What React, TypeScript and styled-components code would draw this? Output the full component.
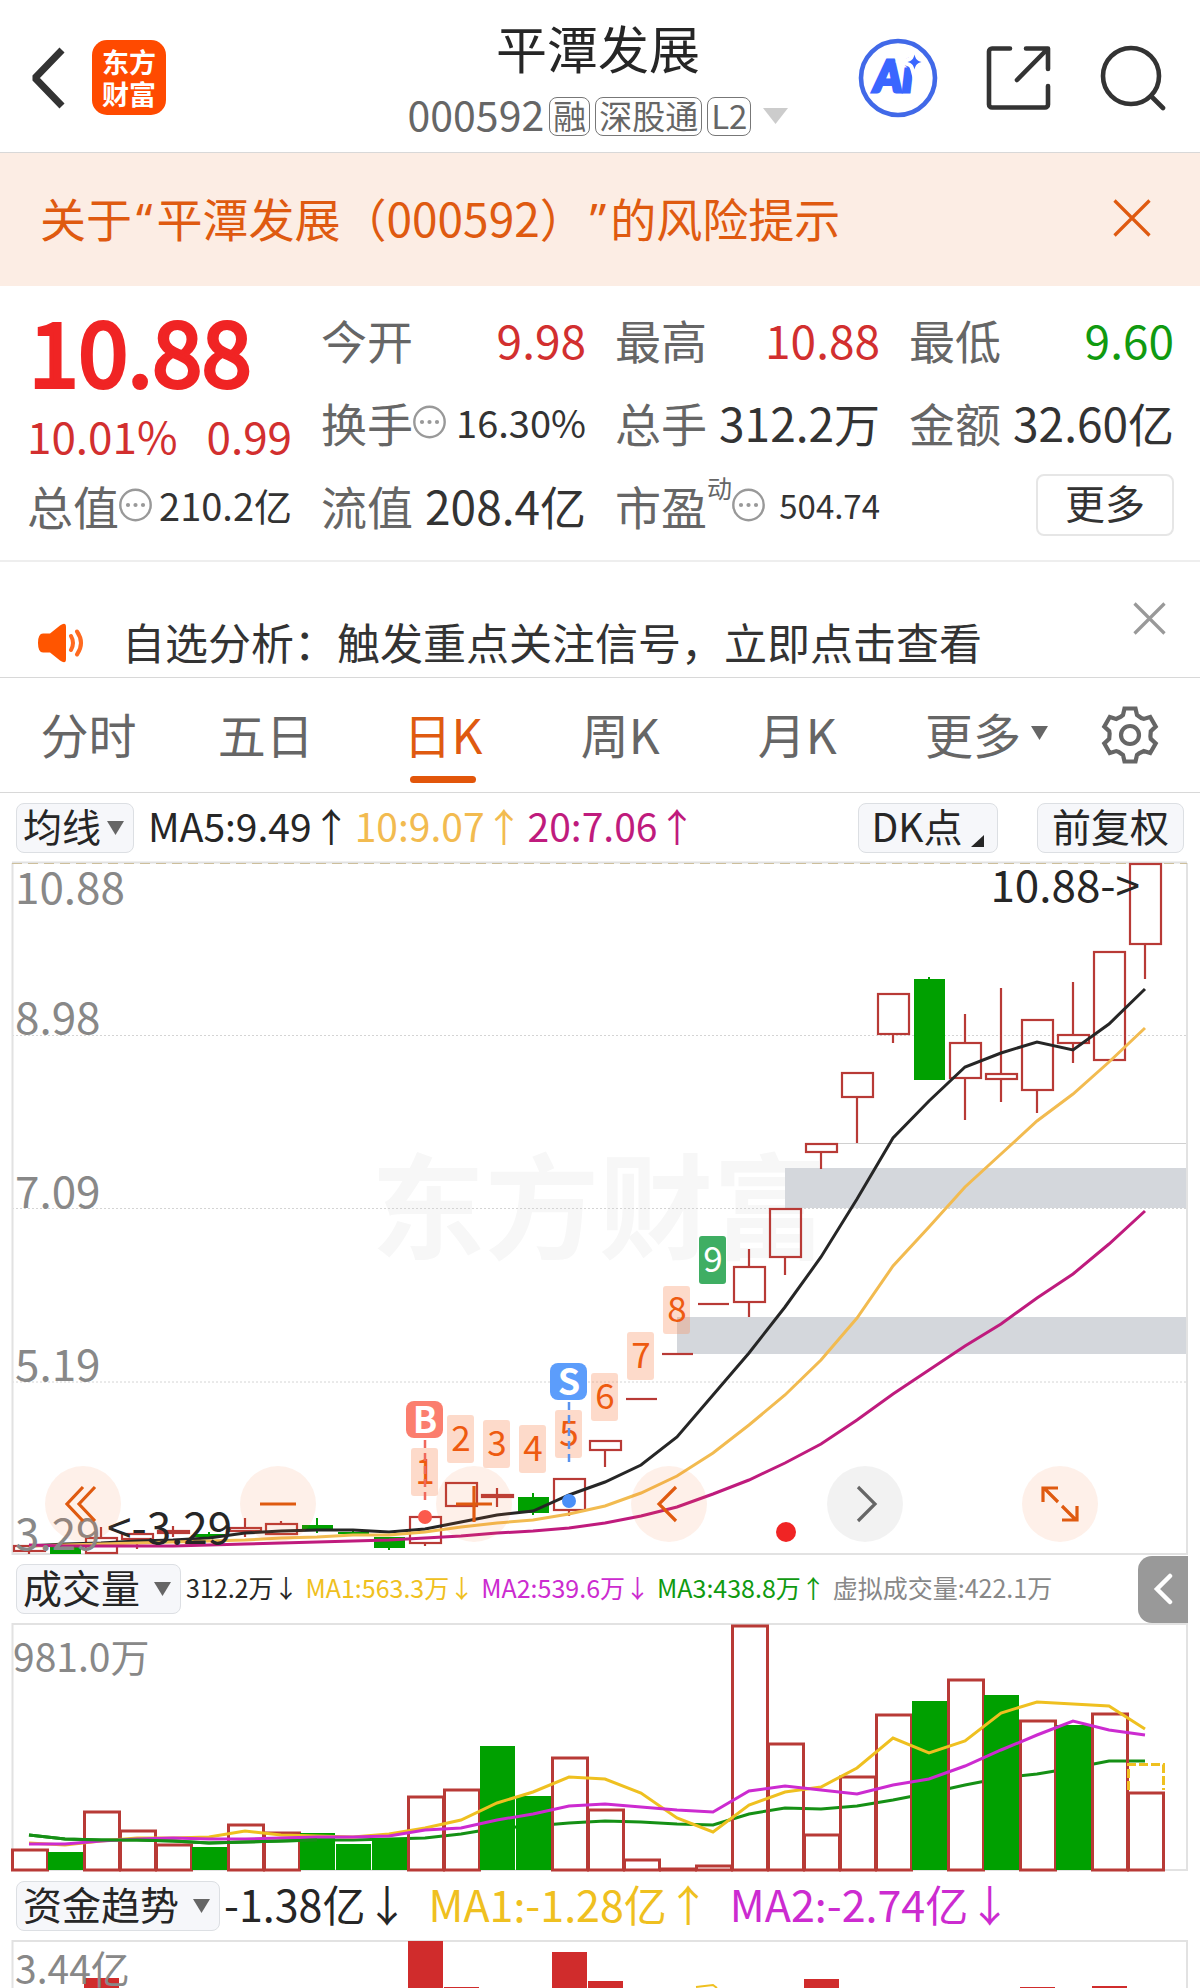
import React, { useState } from 'react';
import styled, { createGlobalStyle } from 'styled-components';

const C = {
  ink: '#262626',
  text: '#333333',
  label: '#666666',
  muted: '#888888',
  line: '#d8d8d8',
  orange: '#df5a10',
  red: '#d22f2f',
  up: '#b83a36',
  green: '#00a000',
  yellow: '#efc020',
  purple: '#cc2bd0',
  magenta: '#bf1b7d',
  amber: '#f2bb50',
};

const GlobalStyle = createGlobalStyle`
  *, *::before, *::after { box-sizing: border-box; }
  body {
    margin: 0;
    background: #fff;
    color: ${C.ink};
    font-family: "Noto Sans CJK SC", "Noto Sans", sans-serif;
    text-spacing-trim: space-all;
  }
  button, select { font-family: inherit; color: inherit; }
  svg { display: block; }
`;

const Page = styled.main`
  overflow: hidden;
  background: #fff;
`;

const PlainButton = styled.button`
  display: flex;
  align-items: center;
  justify-content: center;
  padding: 0;
  border: 0;
  background: none;
  cursor: pointer;
`;

/* ---------- header ---------- */

const Header = styled.header`
  display: grid;
  grid-template-columns: 1fr auto 1fr;
  align-items: center;
  height: 153px;
  padding: 0 34px 0 30px;
  border-bottom: 1px solid ${C.line};
`;

const HeaderSide = styled.div<{ $end?: boolean }>`
  display: flex;
  align-items: center;
  justify-content: ${p => (p.$end ? 'flex-end' : 'flex-start')};
  gap: ${p => (p.$end ? 48 : 26)}px;
  padding-top: 3px;
`;

const Logo = styled.a`
  display: grid;
  place-content: center;
  width: 74px;
  height: 75px;
  border-radius: 15px;
  background: #ff4a00;
  color: #fff;
  font-size: 27px;
  font-weight: 700;
  line-height: 32px;
  text-align: center;
  text-decoration: none;
`;

const Titles = styled.div`
  display: flex;
  flex-direction: column;
  align-items: center;
`;

const Title = styled.h1`
  margin: 0;
  padding-top: 12px;
  font-size: 51px;
  font-weight: 400;
  line-height: 68px;
`;

const SubTitle = styled.div`
  display: flex;
  align-items: center;
  gap: 5px;
  height: 70px;
  color: ${C.label};
  font-size: 41px;
`;

const Tag = styled.span`
  height: 39px;
  padding: 0 3px;
  border: 1px solid #777;
  border-radius: 8px;
  font-size: 33px;
  line-height: 34px;
`;

const Code = styled.span`
  padding-bottom: 6px;
  line-height: 48px;
`;

const Expand = styled(PlainButton)`
  padding-left: 7px;
`;

/* ---------- risk banner ---------- */

const Banner = styled.section`
  display: flex;
  align-items: center;
  justify-content: space-between;
  height: 133px;
  padding: 0 49px 3px 40px;
  background: #fcede4;
  color: ${C.orange};
`;

const BannerLink = styled.a`
  color: inherit;
  font-size: 46px;
  line-height: 60px;
  text-decoration: none;
`;

const Quote = styled.span`
  padding: 0 4px;
  font-family: "Noto Sans", sans-serif;
`;

/* ---------- quote figures ---------- */

const Figures = styled.section`
  display: grid;
  grid-template-columns: repeat(4, 1fr);
  grid-template-rows: repeat(3, 83px);
  column-gap: 29px;
  height: 276px;
  padding: 11px 26px 0 27px;
  border-bottom: 2px solid #eeeeee;
`;

const Headline = styled.div`
  grid-row: span 2;
  display: flex;
  flex-direction: column;
  color: #f02424;
`;

const Price = styled.strong`
  padding-left: 2px;
  font-size: 89px;
  font-weight: 400;
  line-height: 104px;
  -webkit-text-stroke: 4px #f02424;
`;

const Change = styled.div`
  display: flex;
  justify-content: space-between;
  color: ${C.red};
  font-size: 44px;
  line-height: 68px;
`;

const Figure = styled.div`
  display: flex;
  align-items: center;
  justify-content: space-between;
  white-space: nowrap;
  line-height: 60px;
`;

const FigureLabel = styled.span`
  display: flex;
  align-items: center;
  color: ${C.label};
  font-size: 46px;
`;

const FigureValue = styled.span<{ $size?: number; $color?: string }>`
  color: ${p => p.$color || C.text};
  font-size: ${p => p.$size || 46}px;
`;

const Dynamic = styled.sup`
  align-self: flex-start;
  font-size: 25px;
  line-height: 24px;
`;

const MoreButton = styled(PlainButton)`
  justify-self: end;
  align-self: center;
  width: 138px;
  height: 62px;
  padding-bottom: 5px;
  border: 2px solid #e6e6e6;
  border-radius: 8px;
  color: ${C.text};
  font-size: 40px;
  line-height: 56px;
`;

/* ---------- notice ---------- */

const Notice = styled.section`
  display: flex;
  align-items: center;
  height: 116px;
  padding: 47px 34px 0 37px;
  border-bottom: 1px solid ${C.line};
`;

const NoticeText = styled.a`
  flex: 1;
  padding: 0 0 4px 36px;
  color: ${C.text};
  font-size: 43px;
  line-height: 56px;
  text-decoration: none;
`;

const NoticeClose = styled(PlainButton)`
  align-self: flex-start;
  margin-top: -7px;
`;

/* ---------- period tabs ---------- */

const Tabs = styled.nav`
  display: grid;
  grid-template-columns: repeat(6, 4fr) 3fr;
  height: 115px;
  padding-right: 4px;
  border-bottom: 1px solid ${C.line};
`;

const Tab = styled(PlainButton)<{ $active?: boolean }>`
  position: relative;
  gap: 10px;
  padding-bottom: 4px;
  color: ${p => (p.$active ? C.orange : C.label)};
  font-size: 48px;
  line-height: 60px;

  &::after {
    content: '';
    position: absolute;
    bottom: 9px;
    left: 50%;
    width: 66px;
    height: 7px;
    margin-left: -33px;
    border-radius: 4px;
    background: ${p => (p.$active ? '#e2560a' : 'transparent')};
  }
`;

const MoreTab = styled(Tab)`
  padding-left: 24px;
`;

/* ---------- indicator bars ---------- */

const IndicatorBar = styled.div<{ $height: number }>`
  display: flex;
  align-items: center;
  height: ${p => p.$height}px;
  padding: 0 12px 0 16px;
  white-space: nowrap;
`;

const SelectBox = styled.label<{ $width: number }>`
  display: grid;
  align-items: center;
  width: ${p => p.$width}px;
  height: 50px;
  border: 1px solid #dcdfe3;
  border-radius: 8px;
  background: #f6f7fa;

  > * { grid-area: 1 / 1; }
  > svg { justify-self: end; margin-right: 9px; pointer-events: none; }
`;

const Select = styled.select`
  width: 100%;
  height: 48px;
  padding: 0 0 5px 6px;
  border: 0;
  background: none;
  appearance: none;
  font-size: 39px;
  line-height: 43px;
`;

const ChipButton = styled(PlainButton)<{ $width: number }>`
  width: ${p => p.$width}px;
  height: 50px;
  padding-bottom: 5px;
  border: 1px solid #dcdfe3;
  border-radius: 8px;
  background: #f6f7fa;
  font-size: 39px;
  line-height: 44px;
`;

const Chips = styled.div`
  display: flex;
  gap: 39px;
  margin-left: auto;
  padding-right: 4px;
`;

const Readings = styled.div<{ $size: number; $gap: number; $left: number }>`
  display: flex;
  gap: ${p => p.$gap}px;
  padding: 0 0 5px ${p => p.$left}px;
  font-size: ${p => p.$size}px;
  line-height: 48px;
`;

const Reading = styled.span<{ $color: string }>`
  color: ${p => p.$color};
`;

const CollapseButton = styled(PlainButton)`
  width: 50px;
  height: 67px;
  margin-left: auto;
  border-radius: 14px 0 0 14px;
  background: #999;
`;

/* ---------- charts ---------- */

const ChartPanel = styled.section`
  position: relative;
  padding: 0 12px;
`;

const Drawing = styled.svg`
  width: 100%;
  height: auto;
  overflow: visible;
`;

const ChartControls = styled.div`
  position: absolute;
  right: 102px;
  bottom: 13px;
  left: 45px;
  display: flex;
  justify-content: space-between;
`;

const RoundButton = styled(PlainButton)<{ $muted?: boolean }>`
  width: 76px;
  height: 76px;
  border-radius: 50%;
  background: ${p => (p.$muted ? 'rgba(0, 0, 0, 0.05)' : 'rgba(250, 110, 40, 0.1)')};
`;

/* ---------- icons ---------- */

const Triangle = ({ w, h, color = C.label }: { w: number; h: number; color?: string }) => (
  <svg width={w} height={h} viewBox="0 0 10 10" preserveAspectRatio="none" aria-hidden="true">
    <path d="M0 0h10L5 10z" fill={color} />
  </svg>
);

const Cross = ({ size, color, width }: { size: number; color: string; width: number }) => (
  <svg width={size} height={size} viewBox={`0 0 ${size} ${size}`} aria-hidden="true">
    <path d={`M1.5 1.5L${size - 1.5} ${size - 1.5}M${size - 1.5} 1.5L1.5 ${size - 1.5}`} stroke={color} strokeWidth={width} />
  </svg>
);

const InfoDots = () => (
  <svg width="33" height="34" viewBox="0 0 33 34" aria-hidden="true">
    <circle cx="16.5" cy="17" r="15.2" fill="none" stroke="#999" strokeWidth="2.4" />
    <g fill="#999">
      <circle cx="9" cy="17" r="2.1" />
      <circle cx="16.5" cy="17" r="2.1" />
      <circle cx="24" cy="17" r="2.1" />
    </g>
  </svg>
);

const BackIcon = () => (
  <svg width="36" height="62" viewBox="0 0 36 62" fill="none" stroke="#333" strokeWidth="7" aria-hidden="true">
    <path d="M32 3L5 31l27 28" strokeLinejoin="bevel" />
  </svg>
);

const AiIcon = () => (
  <svg width="80" height="80" viewBox="0 0 80 80" aria-hidden="true">
    <text x="16" y="54" fontFamily="Lato, sans-serif" fontSize="43" fontWeight="900" fontStyle="italic" fill="#3a66ff" stroke="#3a66ff" strokeWidth="3">Ai</text>
    <path d="M56.500 16.500c1.300 5 2.500 6 7 7.500c-4.500 1.500-5.700 2.500-7 7.500c-1.300-5-2.500-6-7-7.500c4.500-1.500 5.700-2.500 7-7.500z" fill="#3a66ff" stroke="#fff" strokeWidth="8" paintOrder="stroke" />
    <circle cx="40" cy="40" r="37" fill="none" stroke="#4169e8" strokeWidth="4.6" />
  </svg>
);

const ShareIcon = () => (
  <svg width="66" height="66" viewBox="0 0 66 66" fill="none" stroke="#333" strokeWidth="4.600" strokeLinecap="round" strokeLinejoin="round" aria-hidden="true">
    <path d="M24 3.500H6a3 3 0 0 0-3 3V59.500a3 3 0 0 0 3 3H59a3 3 0 0 0 3-3V41" />
    <path d="M40 3.500H62V24M61 4.500L31 35" />
  </svg>
);

const SearchIcon = () => (
  <svg width="66" height="66" viewBox="0 0 66 66" fill="none" stroke="#333" strokeWidth="4.600" strokeLinecap="round" aria-hidden="true">
    <circle cx="31" cy="31" r="28" />
    <path d="M51 51L63 63" />
  </svg>
);

const SpeakerIcon = () => (
  <svg width="49" height="40" viewBox="0 0 49 40" aria-hidden="true">
    <path d="M6 10.500H13L23 2.500Q29-1.500 29 4V36Q29 41.500 23 37.500L13 29.500H6Q1 29.500 1 20T6 10.500z" fill="#ff5500" />
    <path d="M34 13q4 7 0 14M40 8.500q8 11.500 0 23" fill="none" stroke="#ff6a20" strokeWidth="4" strokeLinecap="round" />
  </svg>
);

const GEAR = [0, 60, 120, 180, 240, 300]
  .flatMap(a => {
    const r = (a * Math.PI) / 180;
    return [[-7, -20], [-5.500, -26.500], [5.500, -26.500], [7, -20], [11.300, -17]].map(
      ([x, y]) => `${(30 + x * Math.cos(r) - y * Math.sin(r)).toFixed(1)},${(30 + x * Math.sin(r) + y * Math.cos(r)).toFixed(1)}`,
    );
  })
  .join(' ');

const GearIcon = () => (
  <svg width="60" height="60" viewBox="0 0 60 60" fill="none" stroke="#666" strokeWidth="4.200" aria-hidden="true">
    <polygon points={GEAR} />
    <circle cx="30" cy="30" r="9" />
  </svg>
);

const ControlIcon = ({ d, color = C.orange }: { d: string; color?: string }) => (
  <svg width="40" height="40" viewBox="0 0 40 40" fill="none" stroke={color} strokeWidth="3.200" aria-hidden="true">
    <path d={d} />
  </svg>
);

/* ---------- chart data ---------- */

const STEP = 36;
const mid = (i: number) => 29 + STEP * i;
const toPoints = (ys: number[]) => ys.map((y, i) => `${mid(i)},${y}`).join(' ');

type Candle = ['up' | 'down', number, number, number, number];
// direction, high, body top, body bottom, low
const CANDLES: Candle[] = [
  ['up', 1545, 1546, 1551, 1554], ['down', 1547, 1547, 1554, 1554], ['up', 1527, 1538, 1553, 1553],
  ['up', 1533, 1534, 1539, 1549], ['up', 1526, 1531, 1533, 1537], ['down', 1532, 1534, 1537, 1539],
  ['up', 1518, 1528, 1531, 1537], ['up', 1521, 1524, 1534, 1535], ['down', 1518, 1525, 1529, 1533],
  ['down', 1531, 1532, 1534, 1534], ['down', 1537, 1537, 1548, 1550], ['up', 1516, 1517, 1543, 1546],
  ['up', 1483, 1483, 1506, 1506], ['up', 1488, 1495, 1497, 1507], ['down', 1493, 1497, 1513, 1515],
  ['up', 1478, 1479, 1510, 1516], ['up', 1441, 1441, 1450, 1467], ['up', 1399, 1399, 1399, 1399],
  ['up', 1354, 1354, 1354, 1354], ['up', 1304, 1304, 1304, 1304], ['up', 1249, 1267, 1302, 1317],
  ['up', 1209, 1209, 1257, 1275], ['up', 1144, 1144, 1152, 1169], ['up', 1073, 1073, 1097, 1143],
  ['up', 994, 994, 1034, 1043], ['down', 977, 979, 1080, 1080], ['up', 1014, 1043, 1078, 1120],
  ['up', 988, 1074, 1079, 1102], ['up', 1020, 1020, 1090, 1113], ['up', 982, 1035, 1043, 1063],
  ['up', 952, 952, 1060, 1060], ['up', 864, 864, 944, 979],
];

const PRICE_MA5 = [1546, 1544, 1543, 1541, 1540, 1538, 1533, 1531, 1530, 1530, 1532, 1529, 1522, 1515, 1511, 1495, 1482, 1465, 1437, 1395, 1353, 1307, 1257, 1199, 1138, 1101, 1067, 1053, 1042, 1050, 1024, 989];
const PRICE_MA10 = [1546, 1545, 1544, 1543, 1542, 1541, 1540, 1538, 1537, 1535, 1535, 1532, 1527, 1523, 1520, 1514, 1506, 1493, 1476, 1453, 1425, 1395, 1360, 1318, 1266, 1227, 1187, 1154, 1121, 1094, 1062, 1028];
const PRICE_MA20 = [1545, 1546, 1546, 1546, 1546, 1545, 1544, 1543, 1542, 1541, 1540, 1538, 1536, 1533, 1531, 1528, 1523, 1516, 1507, 1494, 1480, 1463, 1444, 1420, 1394, 1370, 1346, 1324, 1298, 1274, 1244, 1211];

// bar tops, baseline at 1870
const VOLUME: [number, boolean][] = [
  [1849, true], [1852, false], [1811, true], [1830, true], [1844, true], [1847, false], [1824, true], [1832, true],
  [1833, false], [1844, false], [1838, false], [1796, true], [1789, true], [1746, false], [1796, false], [1757, true],
  [1809, true], [1859, true], [1868, true], [1865, true], [1625, true], [1743, true], [1834, true], [1776, true],
  [1714, true], [1701, false], [1679, true], [1695, false], [1720, true], [1725, false], [1713, true], [1792, true],
];
const VOL_MA1 = [1843, 1845, 1841, 1838, 1838, 1837, 1831, 1835, 1836, 1837, 1834, 1828, 1820, 1803, 1792, 1777, 1779, 1793, 1818, 1832, 1805, 1792, 1787, 1768, 1738, 1753, 1741, 1713, 1702, 1704, 1706, 1729];
const VOL_MA2 = [1844, 1844, 1841, 1839, 1838, 1839, 1839, 1838, 1837, 1837, 1836, 1830, 1828, 1820, 1814, 1806, 1804, 1807, 1810, 1812, 1791, 1786, 1790, 1794, 1785, 1779, 1766, 1750, 1735, 1721, 1730, 1735];
const VOL_MA3 = [1835, 1839, 1840, 1840, 1841, 1843, 1842, 1841, 1840, 1840, 1839, 1838, 1834, 1828, 1826, 1823, 1821, 1822, 1824, 1825, 1814, 1808, 1809, 1806, 1800, 1793, 1785, 1778, 1774, 1768, 1761, 1761];

const FLOW_BARS: [number, number][] = [[2, 1978], [11, 1941], [12, 1987], [15, 1952], [16, 1981], [22, 1979], [28, 1987], [30, 1986]];

// candle index, top edge, digit
const COUNTS: [number, number, string][] = [
  [11, 1448, '1'], [12, 1415, '2'], [13, 1420, '3'], [14, 1425, '4'], [15, 1410, '5'],
  [16, 1373, '6'], [17, 1332, '7'], [18, 1286, '8'], [19, 1236, '9'],
];

const CandleShape = ({ i, data: [dir, high, top, bottom, low] }: { i: number; data: Candle }) => {
  const x = mid(i);
  if (dir === 'down') {
    return (
      <g fill={C.green} stroke={C.green}>
        <path d={`M${x} ${high}V${low}`} strokeWidth="2" />
        <rect x={x - 15} y={top} width="31" height={bottom - top} stroke="none" />
      </g>
    );
  }
  return (
    <g fill="none" stroke={C.up} strokeWidth="2.200">
      <path d={`M${x} ${high}V${top}M${x} ${bottom}V${low}`} />
      {top === bottom ? <path d={`M${x - 15} ${top}h31`} /> : <rect x={x - 15} y={top} width="31" height={bottom - top} />}
    </g>
  );
};

const PriceChart = () => (
  <Drawing viewBox="12 862 1176 693" role="img" aria-label="日K">
    <text x="371" y="1250" fontSize="114" fontWeight="700" fill="#f7f7f7">东方财富</text>
    <path d="M12 1035.500H1188M12 1208.500H1188M12 1382H1188" stroke="#d4d4d4" strokeDasharray="2 2" />
    <path d="M837 1143.500H1187" stroke="#d0d0d0" />
    <rect x="785" y="1168" width="402" height="40" fill="#d4d7dc" />
    <rect x="677" y="1317" width="510" height="37" fill="#d4d7dc" />
    <path d="M12.500 863V1554H1187V863" fill="none" stroke="#e2e2e2" strokeWidth="2" />
    <path d="M12 862.500H1187" stroke="#e2e2e2" strokeWidth="2" />
    <path d="M12 863.500H1187" stroke="#cdbf9c" strokeDasharray="10 6" />
    {CANDLES.map((c, i) => <CandleShape key={i} i={i} data={c} />)}
    <g fill="none" strokeWidth="3">
      <polyline points={toPoints(PRICE_MA5)} stroke={C.ink} />
      <polyline points={toPoints(PRICE_MA10)} stroke={C.amber} />
      <polyline points={toPoints(PRICE_MA20)} stroke={C.magenta} />
    </g>
    {COUNTS.map(([i, top, digit]) => (
      <g key={digit}>
        <rect x={mid(i) - 14} y={top} width="27" height="48" rx="3" fill={digit === '9' ? '#3fae63' : 'rgba(250, 140, 90, 0.32)'} />
        <text x={mid(i)} y={top + 36} fontSize="35" textAnchor="middle" fill={digit === '9' ? '#fff' : '#ee5a10'}>{digit}</text>
      </g>
    ))}
    <path d="M425 1440V1503" stroke="#f0685c" strokeWidth="2.500" strokeDasharray="8 5" />
    <circle cx="425" cy="1517" r="7" fill="#fb5a4c" />
    <rect x="406" y="1401" width="37" height="37" rx="8" fill="#fb7e6e" />
    <text x="425" y="1433" fontSize="36" fontWeight="700" textAnchor="middle" fill="#fff">B</text>
    <path d="M569 1402V1465" stroke="#5b93ee" strokeWidth="2.500" strokeDasharray="8 5" />
    <circle cx="569" cy="1501" r="7" fill="#4a90f8" />
    <rect x="550" y="1363" width="37" height="37" rx="8" fill="#5c9dfb" />
    <text x="569" y="1395" fontSize="36" fontWeight="700" textAnchor="middle" fill="#fff">S</text>
    <circle cx="786" cy="1532" r="10" fill="#f02424" />
    <g fontSize="44" fill={C.muted}>
      <text x="15" y="904">10.88</text>
      <text x="15" y="1034">8.98</text>
      <text x="15" y="1208">7.09</text>
      <text x="15" y="1381">5.19</text>
      <text x="15" y="1550">3.29</text>
    </g>
    <g fontSize="44" fill={C.ink}>
      <text x="1140" y="902" textAnchor="end">10.88-&gt;</text>
      <text x="107" y="1544">&lt;-3.29</text>
    </g>
  </Drawing>
);

const VolumeChart = () => (
  <Drawing viewBox="12 1623 1176 248" role="img" aria-label="成交量">
    <path d="M12.500 1624H1187V1870H12.500z" fill="none" stroke="#e2e2e2" strokeWidth="2" />
    <polyline points={toPoints(VOL_MA3)} fill="none" stroke="#159015" strokeWidth="3" />
    {VOLUME.map(([top, up], i) => {
      const x = 12 + STEP * i;
      return up ? (
        <rect key={i} x={x + 0.500} y={top + 1} width="35" height={1869 - top} fill="none" stroke={C.up} strokeWidth="3" />
      ) : (
        <rect key={i} x={x} y={top} width="35" height={1870 - top} fill={C.green} />
      );
    })}
    <path d="M1128.500 1790V1764.500H1163.500V1790" fill="none" stroke={C.yellow} strokeWidth="3" strokeDasharray="9 3" />
    <g fill="none" strokeWidth="3">
      <polyline points={toPoints(VOL_MA1)} stroke={C.yellow} />
      <polyline points={toPoints(VOL_MA2)} stroke={C.purple} />
      <polyline points={toPoints(VOL_MA3.slice(0, 9))} stroke="#159015" />
    </g>
    <text x="13" y="1672" fontSize="39" fill={C.muted}>981.0万</text>
  </Drawing>
);

const FlowChart = () => (
  <Drawing viewBox="12 1940 1176 48" role="img" aria-label="资金趋势">
    <path d="M12.500 1990V1941H1187V1990" fill="none" stroke="#e2e2e2" strokeWidth="2" />
    {FLOW_BARS.map(([i, top]) => (
      <rect key={i} x={12 + STEP * i} y={top} width="35" height={2000 - top} fill="#d02c2c" />
    ))}
    <polyline points="696,1987 713,1985 717,1988" fill="none" stroke={C.yellow} strokeWidth="2" />
    <text x="15" y="1984" fontSize="39" fill={C.muted}>3.44亿</text>
  </Drawing>
);

const PERIODS = ['分时', '五日', '日K', '周K', '月K'];

export default function App() {
  const [period, setPeriod] = useState('日K');

  return (
    <Page>
      <GlobalStyle />
      <Header>
        <HeaderSide>
          <PlainButton aria-label="返回"><BackIcon /></PlainButton>
          <Logo href="#">东方<br />财富</Logo>
        </HeaderSide>
        <Titles>
          <Title>平潭发展</Title>
          <SubTitle>
            <Code>000592</Code>
            <Tag>融</Tag>
            <Tag>深股通</Tag>
            <Tag>L2</Tag>
            <Expand aria-label="展开"><Triangle w={25} h={16} color="#ccc" /></Expand>
          </SubTitle>
        </Titles>
        <HeaderSide $end>
          <PlainButton aria-label="AI"><AiIcon /></PlainButton>
          <PlainButton aria-label="分享"><ShareIcon /></PlainButton>
          <PlainButton aria-label="搜索"><SearchIcon /></PlainButton>
        </HeaderSide>
      </Header>

      <Banner>
        <BannerLink href="#">
          关于<Quote>“</Quote>平潭发展（000592）<Quote>”</Quote>的风险提示
        </BannerLink>
        <PlainButton aria-label="关闭"><Cross size={38} color={C.orange} width={3.2} /></PlainButton>
      </Banner>

      <Figures>
        <Headline>
          <Price>10.88</Price>
          <Change><span>10.01%</span><span>0.99</span></Change>
        </Headline>
        <Figure><FigureLabel>今开</FigureLabel><FigureValue $color={C.red}>9.98</FigureValue></Figure>
        <Figure><FigureLabel>最高</FigureLabel><FigureValue $color={C.red}>10.88</FigureValue></Figure>
        <Figure><FigureLabel>最低</FigureLabel><FigureValue $color="#109a10">9.60</FigureValue></Figure>
        <Figure><FigureLabel>换手<InfoDots /></FigureLabel><FigureValue $size={38}>16.30%</FigureValue></Figure>
        <Figure><FigureLabel>总手</FigureLabel><FigureValue>312.2万</FigureValue></Figure>
        <Figure><FigureLabel>金额</FigureLabel><FigureValue>32.60亿</FigureValue></Figure>
        <Figure><FigureLabel>总值<InfoDots /></FigureLabel><FigureValue $size={38}>210.2亿</FigureValue></Figure>
        <Figure><FigureLabel>流值</FigureLabel><FigureValue>208.4亿</FigureValue></Figure>
        <Figure><FigureLabel>市盈<Dynamic>动</Dynamic><InfoDots /></FigureLabel><FigureValue $size={33}>504.74</FigureValue></Figure>
        <MoreButton>更多</MoreButton>
      </Figures>

      <Notice>
        <SpeakerIcon />
        <NoticeText href="#">自选分析：触发重点关注信号，立即点击查看</NoticeText>
        <NoticeClose aria-label="关闭"><Cross size={33} color="#999" width={3.2} /></NoticeClose>
      </Notice>

      <Tabs>
        {PERIODS.map(p => (
          <Tab key={p} $active={p === period} onClick={() => setPeriod(p)}>{p}</Tab>
        ))}
        <MoreTab>更多<Triangle w={17} h={14} /></MoreTab>
        <PlainButton aria-label="设置"><GearIcon /></PlainButton>
      </Tabs>

      <IndicatorBar $height={69}>
        <SelectBox $width={118}>
          <Select aria-label="主图指标"><option>均线</option></Select>
          <Triangle w={17} h={14} />
        </SelectBox>
        <Readings $size={39} $gap={4} $left={14}>
          <Reading $color={C.ink}>MA5:9.49↑</Reading>
          <Reading $color={C.amber}>10:9.07↑</Reading>
          <Reading $color={C.magenta}>20:7.06↑</Reading>
        </Readings>
        <Chips>
          <ChipButton $width={140}>
            DK点
            <svg width="22" height="12" viewBox="0 0 22 12" aria-hidden="true" style={{ alignSelf: 'flex-end' }}>
              <path d="M21 0V12H8z" fill={C.ink} />
            </svg>
          </ChipButton>
          <ChipButton $width={147}>前复权</ChipButton>
        </Chips>
      </IndicatorBar>

      <ChartPanel>
        <PriceChart />
        <ChartControls>
          <RoundButton aria-label="最早"><ControlIcon d="M20 3L4 20l16 17M32 3L16 20l16 17" /></RoundButton>
          <RoundButton aria-label="缩小"><ControlIcon d="M2 20h36" /></RoundButton>
          <RoundButton aria-label="放大"><ControlIcon d="M2 20h36M20 2v36" /></RoundButton>
          <RoundButton aria-label="向前"><ControlIcon d="M27 3L10 20l17 17" /></RoundButton>
          <RoundButton aria-label="向后" $muted><ControlIcon d="M13 3l17 17-17 17" color={C.label} /></RoundButton>
          <RoundButton aria-label="全屏"><ControlIcon d="M3 18V4H18M4 4l14 14M37 22V36H22M36 36L22 22" /></RoundButton>
        </ChartControls>
      </ChartPanel>

      <IndicatorBar $height={68}>
        <SelectBox $width={165}>
          <Select aria-label="副图指标一"><option>成交量</option></Select>
          <Triangle w={17} h={14} />
        </SelectBox>
        <Readings $size={25} $gap={7} $left={5}>
          <Reading $color={C.ink}>312.2万↓</Reading>
          <Reading $color={C.yellow}>MA1:563.3万↓</Reading>
          <Reading $color={C.purple}>MA2:539.6万↓</Reading>
          <Reading $color="#109a10">MA3:438.8万↑</Reading>
          <Reading $color={C.muted}>虚拟成交量:422.1万</Reading>
        </Readings>
        <CollapseButton aria-label="收起">
          <svg width="20" height="32" viewBox="0 0 20 32" fill="none" stroke="#fff" strokeWidth="4.500" strokeLinecap="round" aria-hidden="true">
            <path d="M17 3L4 16l13 13" />
          </svg>
        </CollapseButton>
      </IndicatorBar>

      <ChartPanel><VolumeChart /></ChartPanel>

      <IndicatorBar $height={69}>
        <SelectBox $width={204}>
          <Select aria-label="副图指标二"><option>资金趋势</option></Select>
          <Triangle w={17} h={14} />
        </SelectBox>
        <Readings $size={43} $gap={20} $left={4}>
          <Reading $color={C.ink}>-1.38亿↓</Reading>
          <Reading $color={C.yellow}>MA1:-1.28亿↑</Reading>
          <Reading $color={C.purple}>MA2:-2.74亿↓</Reading>
        </Readings>
      </IndicatorBar>

      <ChartPanel><FlowChart /></ChartPanel>
    </Page>
  );
}
